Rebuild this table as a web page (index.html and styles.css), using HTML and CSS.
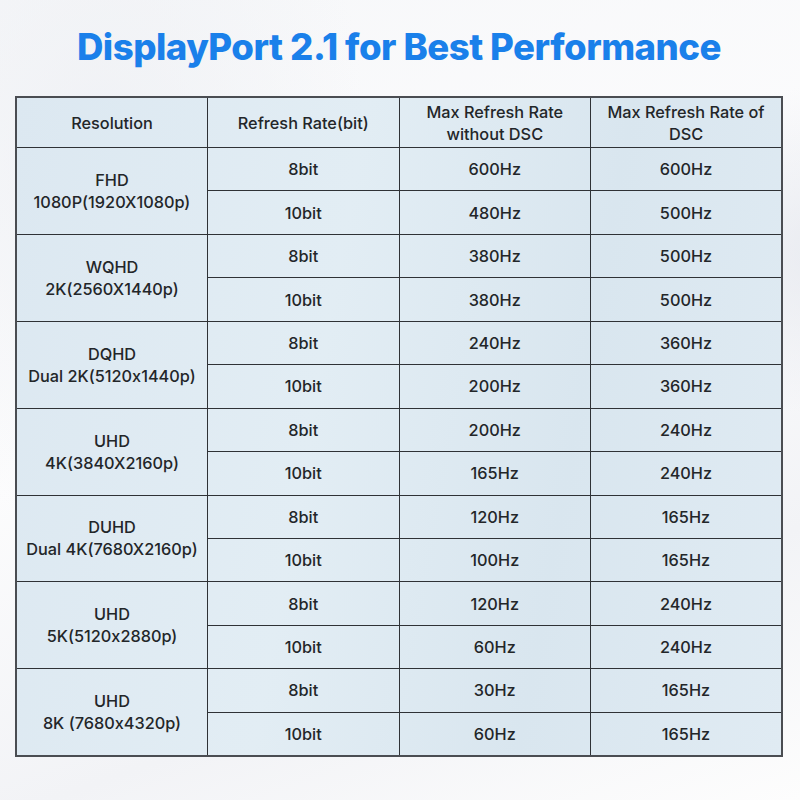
FILE: index.html
```html
<!DOCTYPE html>
<html>
<head>
<meta charset="utf-8">
<link rel="stylesheet" href="styles.css">
</head>
<body>
<div class="page">
  <h1 class="title">DisplayPort 2.1 for Best Performance</h1>
  <table class="spec">
    <thead>
      <tr>
        <th>Resolution</th>
        <th>Refresh Rate(bit)</th>
        <th>Max Refresh Rate<br>without DSC</th>
        <th>Max Refresh Rate of<br>DSC</th>
      </tr>
    </thead>
    <tbody>
      <tr><td rowspan="2">FHD<br>1080P(1920X1080p)</td><td>8bit</td><td>600Hz</td><td>600Hz</td></tr>
      <tr><td>10bit</td><td>480Hz</td><td>500Hz</td></tr>
      <tr><td rowspan="2">WQHD<br>2K(2560X1440p)</td><td>8bit</td><td>380Hz</td><td>500Hz</td></tr>
      <tr><td>10bit</td><td>380Hz</td><td>500Hz</td></tr>
      <tr><td rowspan="2">DQHD<br>Dual 2K(5120x1440p)</td><td>8bit</td><td>240Hz</td><td>360Hz</td></tr>
      <tr><td>10bit</td><td>200Hz</td><td>360Hz</td></tr>
      <tr><td rowspan="2">UHD<br>4K(3840X2160p)</td><td>8bit</td><td>200Hz</td><td>240Hz</td></tr>
      <tr><td>10bit</td><td>165Hz</td><td>240Hz</td></tr>
      <tr><td rowspan="2">DUHD<br>Dual 4K(7680X2160p)</td><td>8bit</td><td>120Hz</td><td>165Hz</td></tr>
      <tr><td>10bit</td><td>100Hz</td><td>165Hz</td></tr>
      <tr><td rowspan="2">UHD<br>5K(5120x2880p)</td><td>8bit</td><td>120Hz</td><td>240Hz</td></tr>
      <tr><td>10bit</td><td>60Hz</td><td>240Hz</td></tr>
      <tr><td rowspan="2">UHD<br>8K (7680x4320p)</td><td>8bit</td><td>30Hz</td><td>165Hz</td></tr>
      <tr><td>10bit</td><td>60Hz</td><td>165Hz</td></tr>
    </tbody>
  </table>
</div>
</body>
</html>
```

FILE: styles.css
```css
html, body {
  margin: 0;
  padding: 0;
}
body {
  width: 800px;
  height: 800px;
  overflow: hidden;
  font-family: Inter, "Noto Sans", sans-serif;
  font-feature-settings: "calt" 0;
  color: #222;
  background:
    radial-gradient(ellipse 480px 240px at 880px 250px, rgba(226,229,236,0.8), rgba(255,255,255,0) 70%),
    radial-gradient(ellipse 380px 560px at 100px 140px, rgba(238,240,244,0.8), rgba(255,255,255,0) 70%),
    linear-gradient(160deg, #f6f7f9 0%, #fcfcfd 45%, #f2f3f6 75%, #fdfdfd 100%);
}
.page {
  padding: 23px 17px 0 15px;
  display: flex;
  flex-direction: column;
  align-items: stretch;
}
.title {
  margin: 0;
  height: 48px;
  text-align: center;
  font-weight: 800;
  font-size: 36.6px;
  line-height: 48px;
  letter-spacing: -0.5px;
  color: #1a80ea;
}
.spec {
  margin-top: 25px;
  width: 768px;
  border-collapse: collapse;
  table-layout: fixed;
  border: 2px solid #4a4d52;
  background: linear-gradient(100deg, #dce8f1 0%, #e2edf4 40%, #d9e6ef 70%, #e0ebf3 100%);
}
.spec th, .spec td {
  border: 1px solid #2f3236;
  text-align: center;
  vertical-align: middle;
  font-size: 16.3px;
  font-weight: 500;
  line-height: 22px;
  padding: 0;
  color: #232629;
}
.spec thead th {
  height: 49px;
}
.spec tbody tr {
  height: 43.45px;
}
```
